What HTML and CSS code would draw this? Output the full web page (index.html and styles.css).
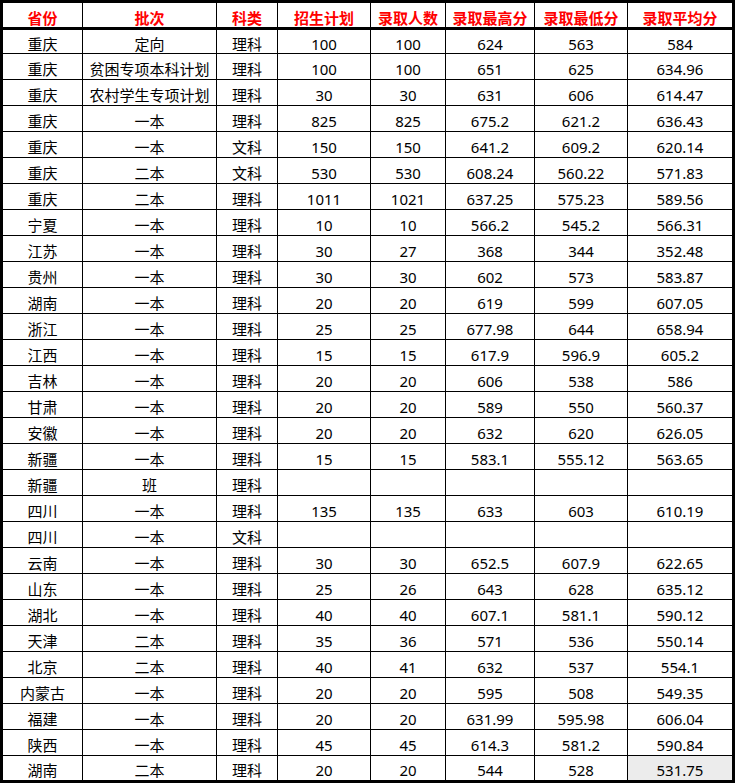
FILE: index.html
```html
<!DOCTYPE html>
<html lang="zh">
<head>
<meta charset="utf-8">
<title>录取分数</title>
<link rel="stylesheet" href="styles.css">
</head>
<body>
<div class="sheet">
  <div class="row head"><div class="c">省份</div><div class="c">批次</div><div class="c">科类</div><div class="c">招生计划</div><div class="c">录取人数</div><div class="c">录取最高分</div><div class="c">录取最低分</div><div class="c">录取平均分</div></div>
  <div class="row first"><div class="c">重庆</div><div class="c">定向</div><div class="c">理科</div><div class="c">100</div><div class="c">100</div><div class="c">624</div><div class="c">563</div><div class="c">584</div></div>
  <div class="row"><div class="c">重庆</div><div class="c">贫困专项本科计划</div><div class="c">理科</div><div class="c">100</div><div class="c">100</div><div class="c">651</div><div class="c">625</div><div class="c">634.96</div></div>
  <div class="row"><div class="c">重庆</div><div class="c">农村学生专项计划</div><div class="c">理科</div><div class="c">30</div><div class="c">30</div><div class="c">631</div><div class="c">606</div><div class="c">614.47</div></div>
  <div class="row"><div class="c">重庆</div><div class="c">一本</div><div class="c">理科</div><div class="c">825</div><div class="c">825</div><div class="c">675.2</div><div class="c">621.2</div><div class="c">636.43</div></div>
  <div class="row"><div class="c">重庆</div><div class="c">一本</div><div class="c">文科</div><div class="c">150</div><div class="c">150</div><div class="c">641.2</div><div class="c">609.2</div><div class="c">620.14</div></div>
  <div class="row"><div class="c">重庆</div><div class="c">二本</div><div class="c">文科</div><div class="c">530</div><div class="c">530</div><div class="c">608.24</div><div class="c">560.22</div><div class="c">571.83</div></div>
  <div class="row"><div class="c">重庆</div><div class="c">二本</div><div class="c">理科</div><div class="c">1011</div><div class="c">1021</div><div class="c">637.25</div><div class="c">575.23</div><div class="c">589.56</div></div>
  <div class="row"><div class="c">宁夏</div><div class="c">一本</div><div class="c">理科</div><div class="c">10</div><div class="c">10</div><div class="c">566.2</div><div class="c">545.2</div><div class="c">566.31</div></div>
  <div class="row"><div class="c">江苏</div><div class="c">一本</div><div class="c">理科</div><div class="c">30</div><div class="c">27</div><div class="c">368</div><div class="c">344</div><div class="c">352.48</div></div>
  <div class="row"><div class="c">贵州</div><div class="c">一本</div><div class="c">理科</div><div class="c">30</div><div class="c">30</div><div class="c">602</div><div class="c">573</div><div class="c">583.87</div></div>
  <div class="row"><div class="c">湖南</div><div class="c">一本</div><div class="c">理科</div><div class="c">20</div><div class="c">20</div><div class="c">619</div><div class="c">599</div><div class="c">607.05</div></div>
  <div class="row"><div class="c">浙江</div><div class="c">一本</div><div class="c">理科</div><div class="c">25</div><div class="c">25</div><div class="c">677.98</div><div class="c">644</div><div class="c">658.94</div></div>
  <div class="row"><div class="c">江西</div><div class="c">一本</div><div class="c">理科</div><div class="c">15</div><div class="c">15</div><div class="c">617.9</div><div class="c">596.9</div><div class="c">605.2</div></div>
  <div class="row"><div class="c">吉林</div><div class="c">一本</div><div class="c">理科</div><div class="c">20</div><div class="c">20</div><div class="c">606</div><div class="c">538</div><div class="c">586</div></div>
  <div class="row"><div class="c">甘肃</div><div class="c">一本</div><div class="c">理科</div><div class="c">20</div><div class="c">20</div><div class="c">589</div><div class="c">550</div><div class="c">560.37</div></div>
  <div class="row"><div class="c">安徽</div><div class="c">一本</div><div class="c">理科</div><div class="c">20</div><div class="c">20</div><div class="c">632</div><div class="c">620</div><div class="c">626.05</div></div>
  <div class="row"><div class="c">新疆</div><div class="c">一本</div><div class="c">理科</div><div class="c">15</div><div class="c">15</div><div class="c">583.1</div><div class="c">555.12</div><div class="c">563.65</div></div>
  <div class="row"><div class="c">新疆</div><div class="c">班</div><div class="c">理科</div><div class="c"></div><div class="c"></div><div class="c"></div><div class="c"></div><div class="c"></div></div>
  <div class="row"><div class="c">四川</div><div class="c">一本</div><div class="c">理科</div><div class="c">135</div><div class="c">135</div><div class="c">633</div><div class="c">603</div><div class="c">610.19</div></div>
  <div class="row"><div class="c">四川</div><div class="c">一本</div><div class="c">文科</div><div class="c"></div><div class="c"></div><div class="c"></div><div class="c"></div><div class="c"></div></div>
  <div class="row"><div class="c">云南</div><div class="c">一本</div><div class="c">理科</div><div class="c">30</div><div class="c">30</div><div class="c">652.5</div><div class="c">607.9</div><div class="c">622.65</div></div>
  <div class="row"><div class="c">山东</div><div class="c">一本</div><div class="c">理科</div><div class="c">25</div><div class="c">26</div><div class="c">643</div><div class="c">628</div><div class="c">635.12</div></div>
  <div class="row"><div class="c">湖北</div><div class="c">一本</div><div class="c">理科</div><div class="c">40</div><div class="c">40</div><div class="c">607.1</div><div class="c">581.1</div><div class="c">590.12</div></div>
  <div class="row"><div class="c">天津</div><div class="c">二本</div><div class="c">理科</div><div class="c">35</div><div class="c">36</div><div class="c">571</div><div class="c">536</div><div class="c">550.14</div></div>
  <div class="row"><div class="c">北京</div><div class="c">二本</div><div class="c">理科</div><div class="c">40</div><div class="c">41</div><div class="c">632</div><div class="c">537</div><div class="c">554.1</div></div>
  <div class="row"><div class="c">内蒙古</div><div class="c">一本</div><div class="c">理科</div><div class="c">20</div><div class="c">20</div><div class="c">595</div><div class="c">508</div><div class="c">549.35</div></div>
  <div class="row"><div class="c">福建</div><div class="c">一本</div><div class="c">理科</div><div class="c">20</div><div class="c">20</div><div class="c">631.99</div><div class="c">595.98</div><div class="c">606.04</div></div>
  <div class="row"><div class="c">陕西</div><div class="c">一本</div><div class="c">理科</div><div class="c">45</div><div class="c">45</div><div class="c">614.3</div><div class="c">581.2</div><div class="c">590.84</div></div>
  <div class="row last"><div class="c">湖南</div><div class="c">二本</div><div class="c">理科</div><div class="c">20</div><div class="c">20</div><div class="c">544</div><div class="c">528</div><div class="c shade">531.75</div></div>
</div>
</body>
</html>
```

FILE: styles.css
```css
html, body {
  margin: 0;
  padding: 0;
  background: #ffffff;
}

body {
  font-family: "Noto Sans", "Noto Sans CJK SC", sans-serif;
  font-size: 15px;
  color: #000000;
}

.sheet {
  width: 735px;
  box-sizing: border-box;
  border: 3px solid #000000;
  display: flex;
  flex-direction: column;
}

.row {
  display: grid;
  grid-template-columns: 80px 134px 61px 93px 75px 89px 93px 104px;
  height: 26px;
  box-sizing: border-box;
  border-bottom: 1px solid #000000;
}

.row.head {
  height: 27px;
  border-bottom: 3px solid #000000;
  color: #ff0000;
  font-weight: bold;
}

.row.head .c {
  padding-top: 7px;
}

.row.first {
  height: 24px;
}

.row.last {
  height: 24px;
  border-bottom: none;
}

.c {
  display: flex;
  align-items: center;
  justify-content: center;
  box-sizing: border-box;
  padding-top: 5px;
  border-right: 1px solid #000000;
  white-space: nowrap;
  line-height: 1;
}

.c:last-child {
  border-right: none;
}

.shade {
  background: #ececec;
}
```
